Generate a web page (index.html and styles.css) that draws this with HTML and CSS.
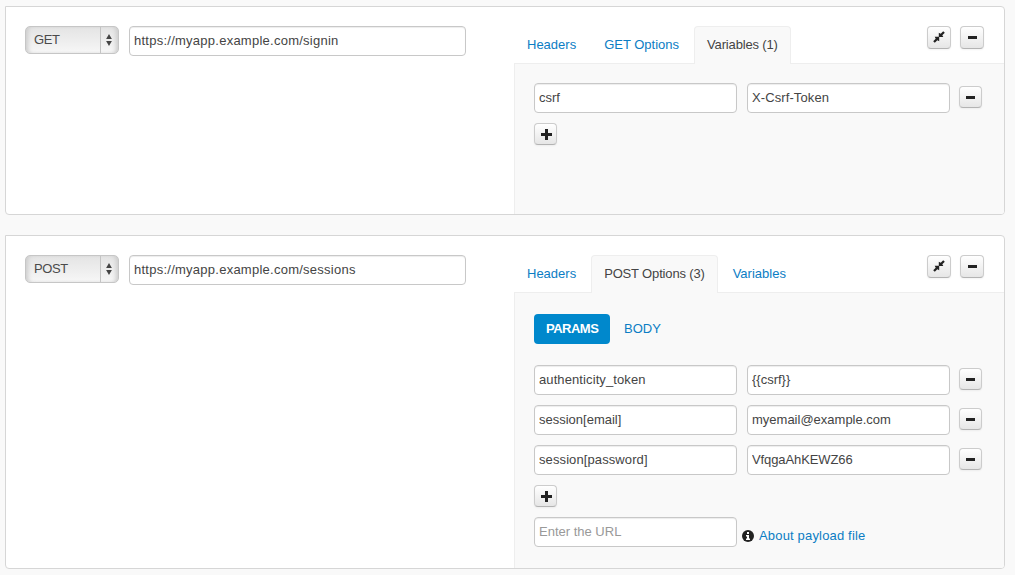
FILE: index.html
```html
<!DOCTYPE html>
<html lang="en">
<head>
<meta charset="utf-8">
<title>Requests</title>
<link rel="stylesheet" href="styles.css">
</head>
<body>
<svg width="0" height="0" class="defs">
  <symbol id="minus" viewBox="0 0 9 3"><path d="M0 0h9v3H0z"/></symbol>
  <symbol id="plus" viewBox="0 0 11 11"><path d="M4 0h3v4h4v3H7v4H4V7H0V4h4z"/></symbol>
  <symbol id="shrink" viewBox="0 0 12 12"><path d="M10.200 .2 11.800 1.800 9.300 4.300 10.300 6H5.800V1.700L7.700 2.700zM1.800 11.800 .2 10.200 2.700 7.700 1.700 5.800H6.200V10.300L4.300 9.300z"/></symbol>
  <symbol id="arrows" viewBox="0 0 6 12"><path d="M3 0l2.900 5H.1zM3 12L.1 7h5.800z"/></symbol>
  <symbol id="info" viewBox="0 0 12 12"><circle cx="6" cy="6" r="6"/><path fill="#fff" d="M5 2h2v2H5zM4 5h3v3.500h1V10H4V8.500h1v-2H4z"/></symbol>
</svg>
<main class="requests">
  <section class="request request-get">
    <div class="target">
      <div class="method"><select aria-label="Method"><option>GET</option></select><svg class="arrows"><use href="#arrows"/></svg></div>
      <input class="field url" value="https://myapp.example.com/signin" aria-label="URL">
    </div>
    <div class="settings">
      <div class="bar">
        <nav class="tabs"><a class="tab">Headers</a><a class="tab">GET Options</a><a class="tab active">Variables (1)</a></nav>
        <div class="actions">
          <button class="btn large" aria-label="Collapse"><svg class="shrink"><use href="#shrink"/></svg></button>
          <button class="btn large" aria-label="Remove request"><svg class="minus"><use href="#minus"/></svg></button>
        </div>
      </div>
      <div class="pane">
        <div class="row"><input class="field" value="csrf"><input class="field loose" value="X-Csrf-Token"><button class="btn" aria-label="Remove"><svg class="minus"><use href="#minus"/></svg></button></div>
        <button class="btn" aria-label="Add"><svg class="plus"><use href="#plus"/></svg></button>
      </div>
    </div>
  </section>
  <section class="request request-post">
    <div class="target">
      <div class="method"><select aria-label="Method"><option>POST</option></select><svg class="arrows"><use href="#arrows"/></svg></div>
      <input class="field url" value="https://myapp.example.com/sessions" aria-label="URL">
    </div>
    <div class="settings">
      <div class="bar">
        <nav class="tabs"><a class="tab">Headers</a><a class="tab active">POST Options (3)</a><a class="tab">Variables</a></nav>
        <div class="actions">
          <button class="btn large" aria-label="Collapse"><svg class="shrink"><use href="#shrink"/></svg></button>
          <button class="btn large" aria-label="Remove request"><svg class="minus"><use href="#minus"/></svg></button>
        </div>
      </div>
      <div class="pane">
        <nav class="pills"><a class="pill selected">PARAMS</a><a class="pill">BODY</a></nav>
        <div class="row"><input class="field loose" value="authenticity_token"><input class="field" value="{{csrf}}"><button class="btn" aria-label="Remove"><svg class="minus"><use href="#minus"/></svg></button></div>
        <div class="row"><input class="field" value="session[email]"><input class="field" value="myemail@example.com"><button class="btn" aria-label="Remove"><svg class="minus"><use href="#minus"/></svg></button></div>
        <div class="row"><input class="field loose" value="session[password]"><input class="field tight" value="VfqgaAhKEWZ66"><button class="btn" aria-label="Remove"><svg class="minus"><use href="#minus"/></svg></button></div>
        <button class="btn" aria-label="Add"><svg class="plus"><use href="#plus"/></svg></button>
        <div class="payload"><input class="field" placeholder="Enter the URL"><a class="about"><svg class="info"><use href="#info"/></svg><span>About payload file</span></a></div>
      </div>
    </div>
  </section>
</main>
</body>
</html>
```
FILE: styles.css
```css
* { box-sizing: border-box; }
body { margin: 0; background: #f9f9f9; color: #444; font: 13px/20px "Liberation Sans", Arial, sans-serif; overflow: hidden; }
.defs { display: none; }
svg { display: block; fill: #222; }
a { color: #0b7dc4; }
.requests { display: flex; flex-direction: column; gap: 20px; width: 1000px; margin: 6px 0 0 5px; }
.request { display: flex; justify-content: space-between; border: 1px solid #d6d6d6; border-radius: 0 4px 4px 4px; background: #fff; overflow: hidden; padding-top: 19px; }
.request-get { height: 209px; }
.request-post { height: 334px; }
.target { display: flex; align-items: flex-start; gap: 10px; padding-left: 19px; }
.method { display: flex; align-items: center; width: 94px; height: 28px; border: 1px solid #c6c6c6; border-radius: 5px; background: linear-gradient(#e4e4e4, #eee 55%, #f7f7f7); box-shadow: inset 4px 0 4px -2px #ccc, inset -4px 0 4px -2px #ccc; }
.method select { appearance: none; width: 75px; height: 26px; padding: 0 0 1px 8px; border: 0; border-right: 1px solid #c4c4c4; background: transparent; color: #4a4a4a; font: inherit; letter-spacing: -.4px; }
.arrows { width: 6px; height: 12px; margin-left: 5px; fill: #444; }
.field { width: 203px; height: 30px; padding: 0 4px 1px; border: 1px solid #c8c8c8; border-radius: 4px; background: #fff; box-shadow: inset 0 1px 1px rgba(0,0,0,.075); color: #444; font: inherit; }
.field::placeholder { color: #999; opacity: 1; }
.loose { letter-spacing: .1px; }
.tight { letter-spacing: -.1px; }
.url { width: 337px; letter-spacing: .25px; }
.settings { display: flex; flex-direction: column; width: 491px; }
.bar { display: flex; justify-content: space-between; height: 37px; padding-left: 1px; }
.tabs { display: flex; gap: 2px; height: 38px; position: relative; white-space: nowrap; }
.tab { padding: 8px 12px; border: 1px solid transparent; height: 38px; }
.tab.active { border-color: #eee; border-bottom: 0; border-radius: 4px 4px 0 0; background: #f9f9f9; color: #444; letter-spacing: -.16px; }
.actions { display: flex; gap: 9px; padding-right: 20px; }
.btn { display: flex; align-items: center; justify-content: center; width: 23px; height: 22px; padding: 0; border: 1px solid #ccc; border-bottom-color: #b3b3b3; border-radius: 4px; background: linear-gradient(#fff, #e6e6e6); box-shadow: inset 0 1px 0 rgba(255,255,255,.2), 0 1px 2px rgba(0,0,0,.05); }
.btn.large { width: 24px; height: 23px; }
.minus { width: 9px; height: 3px; }
.plus { width: 11px; height: 11px; margin: 1px 0 0 2px; }
.shrink { width: 12px; height: 12px; margin-bottom: 1px; }
.pane { display: flex; flex: 1; flex-direction: column; align-items: flex-start; gap: 10px; padding: 19px 0 0 19px; margin-left: 1px; border: 1px solid #eee; border-width: 1px 0 0 1px; background: #f9f9f9; }
.row { display: flex; gap: 10px; }
.row .btn { margin: 3px 0 0 -1px; }
.pills { display: flex; gap: 2px; margin: 2px 0 11px; }
.pill { height: 30px; padding: 5px 12px; }
.pill.selected { width: 76px; border-radius: 4px; background: #08c; color: #fff; font-weight: bold; letter-spacing: -.5px; }
.payload { display: flex; gap: 5px; }
.about { display: flex; gap: 5px; padding-top: 9px; letter-spacing: .17px; }
.info { width: 12px; height: 12px; margin-top: 4px; }
```
